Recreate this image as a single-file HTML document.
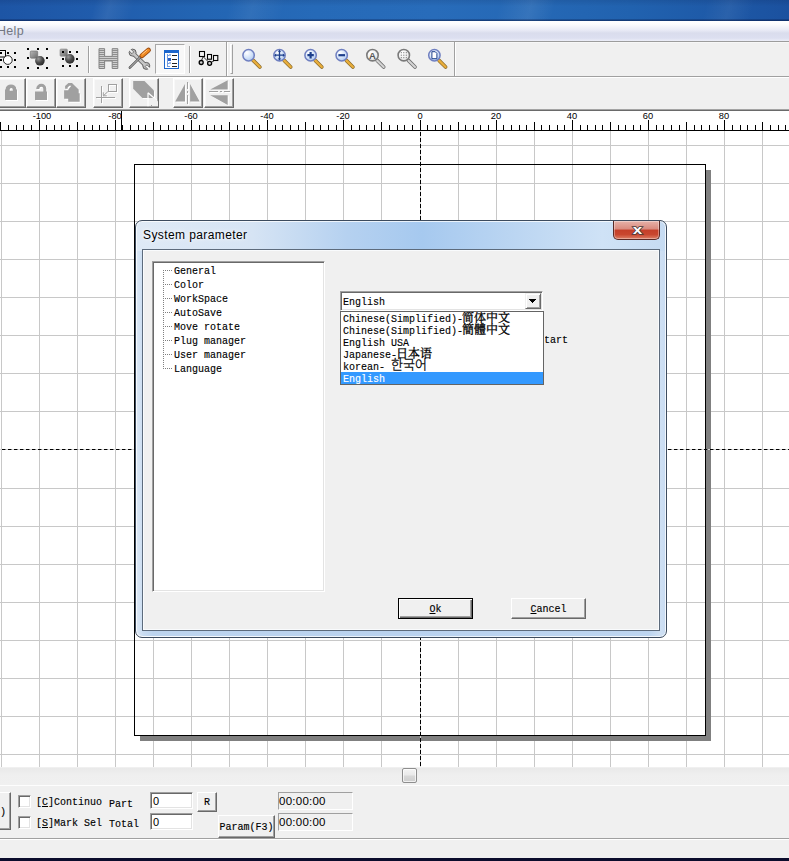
<!DOCTYPE html>
<html lang="en"><head><meta charset="utf-8"><title>System parameter</title>
<style>
html,body{margin:0;padding:0;background:#f0f0f0;}
body{width:789px;height:861px;overflow:hidden;position:relative;font-family:"Liberation Sans","Noto Sans CJK SC",sans-serif;font-size:12px;color:#000;}
#app{position:absolute;left:0;top:0;width:789px;height:861px;overflow:hidden;background:#f0f0f0;}
#app div,#app span,#app i,#app b,#app svg{position:absolute;box-sizing:border-box;}
/* SimSun-like text: 12px mono squeezed horizontally to a 6px advance */
.ss{font-family:"Liberation Mono","Noto Sans CJK SC",monospace;font-size:11px;line-height:12px;white-space:pre;display:inline-block;transform:scaleX(.9091);transform-origin:0 50%;-webkit-text-stroke:.15px #000;}
.ss.c{transform-origin:50% 50%;}
.ss u{text-decoration:underline;text-underline-offset:1px;text-decoration-thickness:1px;}
.cj{font-family:"Liberation Serif","Noto Serif CJK SC","Noto Sans CJK SC","Noto Sans CJK KR",serif;font-size:12px;line-height:12px;white-space:pre;-webkit-text-stroke:.3px #000;}
.cj.kr{font-family:"Liberation Sans","Noto Sans CJK KR","NanumGothic",sans-serif;font-weight:300;font-size:13px;}
/* title */
#titlebar{left:0;top:0;width:789px;height:21px;background:
 linear-gradient(180deg,rgba(0,0,30,.10) 0,rgba(0,0,0,0) 30%,rgba(0,0,0,0) 88%,rgba(0,10,50,.30) 94%,rgba(0,10,50,.55) 100%),
 linear-gradient(105deg,rgba(255,255,255,0) 12%,rgba(255,255,255,.07) 14%,rgba(255,255,255,0) 17%,rgba(255,255,255,0) 29%,rgba(255,255,255,.06) 32%,rgba(255,255,255,0) 36%,rgba(255,255,255,0) 63%,rgba(255,255,255,.08) 67%,rgba(255,255,255,0) 70%,rgba(255,255,255,0) 89%,rgba(255,255,255,.06) 92%,rgba(255,255,255,0) 95%),
 linear-gradient(90deg,#1d55a5 0,#205cac 12%,#2365b3 26%,#266ab8 40%,#286cba 55%,#2568b5 68%,#2162af 80%,#1e5aa8 90%,#1b519f 100%);}
#menubar{left:0;top:21px;width:789px;height:20px;background:linear-gradient(180deg,#ffffff 0,#fcfcfe 15%,#e9ebf6 45%,#dadded 60%,#dcdff0 85%,#eceef8 100%);}
#menubar .mi{left:-3px;top:3px;font-size:12.500px;line-height:14px;color:#737782;letter-spacing:.3px;}
/* toolbars */
#tb1{left:0;top:41px;width:789px;height:36px;background:#f0f0f0;border-top:1px solid #9c9c9c;border-bottom:1px solid #a0a0a0;box-shadow:inset 0 1px 0 #f7f7f7;}
#tb2{left:0;top:77px;width:789px;height:32px;background:#f0f0f0;border-top:1px solid #fff;}
.sep{width:2px;border-left:1px solid #a0a0a0;border-right:1px solid #fff;}
.tbtn{width:30px;height:30px;background:#f0f0f0;border:1px solid;border-color:#fff #696969 #696969 #fff;box-shadow:inset -1px -1px 0 #a0a0a0,inset 1px 1px 0 #f8f8f8;}
/* ruler */
#ruler{left:0;top:109px;width:789px;height:22px;background:#fff;border-top:2px solid #6e6e6e;border-image:linear-gradient(180deg,#a4a4a4 0,#a4a4a4 4.6%,#6a6a6a 4.6%,#6a6a6a 9.1%,#000 9.1%) 2 0 1 0;border-bottom:1px solid #000;overflow:hidden;}
#ruler i{bottom:0;width:1px;background:#000;}
#ruler .rl{top:0px;width:40px;text-align:center;font-size:9.300px;line-height:10px;color:#000;}
#ruler .rmark{left:121px;top:0;width:1px;height:20px;background:#000;}
#ruler .rmark2{left:121px;top:14px;width:2px;height:6px;background:#000;}
/* canvas */
#canvas{left:0;top:131px;width:789px;height:636px;background:#fff;overflow:hidden;}
#canvas .gv{top:0;width:1px;height:636px;background:#c8c8c8;}
#canvas .gh{left:0;height:1px;width:789px;background:#c8c8c8;}
#page{left:134px;top:33px;width:572px;height:572px;border:1px solid #000;}
#pageshadow{left:140px;top:39px;width:571px;height:571px;border-right:5px solid #808080;border-bottom:5px solid #808080;}
#hdash{left:0;top:318px;width:789px;height:1px;background:repeating-linear-gradient(90deg,#000 0,#000 3px,#777 3px,#777 4px,#d6d6d6 4px,#d6d6d6 6px);background-position:2px 0;background-size:6px 1px;}
#vdash{left:420px;top:0;width:1px;height:636px;background:repeating-linear-gradient(180deg,#000 0,#000 4px,#d6d6d6 4px,#d6d6d6 6px);background-position:0 1px;background-size:1px 6px;}
.chk{background:#f8f8f8;border:1px solid;border-color:#a8a8a8 #fff #fff #a8a8a8;}
.tbend{width:2px;border-left:1px solid #a0a0a0;border-right:1px solid #fff;}
.grip{width:3px;border-left:1px solid #fff;border-right:1px solid #a0a0a0;border-top:1px solid #fff;border-bottom:1px solid #a0a0a0;}
/* dialog */
#dlg{left:135px;top:220px;width:532px;height:418px;border:1px solid #3c4b5e;border-radius:7px;background:
 linear-gradient(90deg,#dfeaf6 0,#d6e4f4 22%,#b5d1f0 40%,#a6c9ef 54%,#bcd6f2 72%,#cfe2f6 88%,#c6dbf2 100%);box-shadow:inset 0 0 0 1px rgba(255,255,255,.75);}
#dlgglow{left:1px;top:30px;width:528px;height:385px;background:linear-gradient(90deg,#dbe7f5 0,#c9dcf1 1.2%,#bdd4ee 3%,#b9d2ef 50%,#bdd5f0 97%,#cfe0f3 99%,#c9dcf2 100%);border-radius:0 0 6px 6px;}
#dlgtitle{left:7px;top:7px;font-size:12px;line-height:14px;letter-spacing:.4px;color:#000;white-space:nowrap;text-shadow:0 0 6px #fff,0 0 3px rgba(255,255,255,.8);}
#dlgclose{left:477px;top:0px;width:47px;height:19px;border:1px solid #5a2a26;border-top:none;border-radius:0 0 5px 5px;background:linear-gradient(180deg,#e6b2a9 0,#d98a7e 45%,#c53f29 50%,#c9472f 75%,#dd7f66 100%);box-shadow:inset 0 0 0 1px rgba(255,255,255,.35);}
#client{left:6px;top:28px;width:518px;height:382px;background:#f0f0f0;border:1px solid #5d6b7c;box-shadow:inset 0 0 0 1px #f9fbfd;}
#tree{left:9px;top:11px;width:173px;height:331px;background:#fff;border:1px solid;border-color:#a0a0a0 #fff #fff #a0a0a0;box-shadow:inset 1px 1px 0 #696969,inset -1px -1px 0 #e3e3e3;}
#tree .tv{left:10px;top:8px;width:1px;height:99px;background:repeating-linear-gradient(180deg,#808080 0,#808080 1px,transparent 1px,transparent 2px);}
#tree .th{left:11px;width:8px;height:1px;background:repeating-linear-gradient(90deg,transparent 0,transparent 1px,#808080 1px,#808080 2px);}
#hidtxt{left:197px;top:84px;}
#combo{left:197px;top:41px;width:203px;height:20px;background:#fff;border:1px solid;border-color:#a0a0a0 #fff #fff #a0a0a0;box-shadow:inset 1px 1px 0 #696969,inset -1px -1px 0 #e3e3e3;}
#cbtn{right:1px;top:1px;width:16px;height:16px;background:#f0f0f0;border:1px solid;border-color:#f0f0f0 #696969 #696969 #f0f0f0;box-shadow:inset 1px 1px 0 #fff,inset -1px -1px 0 #a0a0a0;}
#ddl{left:197px;top:61px;width:204px;height:74px;background:#fff;border:1px solid #646464;overflow:hidden;box-shadow:1px 0 0 #f0f0f0;}
#ddl .it{left:0;width:202px;height:12px;}
#ddl .it .ss{left:2px;top:1px;}
#ddl .it .cj{top:0px;}
#ddl .it .kr{top:-1px;}
#ddl .sel{background:#3399ff;color:#fff;}
#ddl .sel .ss{-webkit-text-stroke:.15px #fff;}
.btn{width:75px;height:21px;background:#f0f0f0;border:1px solid;border-color:#fff #696969 #696969 #fff;box-shadow:inset -1px -1px 0 #a0a0a0,inset 1px 1px 0 #f0f0f0;text-align:center;}
.btn.def{border-color:#000;box-shadow:inset 1px 1px 0 #fff,inset -1px -1px 0 #696969,inset -2px -2px 0 #a0a0a0;}
.btn .ss{left:0;right:0;top:4px;text-align:center;}
/* bottom */
#hscroll{left:0;top:768px;width:789px;height:18px;background:linear-gradient(180deg,#e9e9e9 0,#efefef 40%,#f0f0f0 100%);border-bottom:1px solid #fdfdfd;}
#thumb{left:402px;top:0;width:15px;height:15px;border:1px solid #8e8e8e;border-radius:2px;background:linear-gradient(180deg,#f4f4f4 0,#e9e9e9 48%,#d9d9d9 52%,#cdcdcd 100%);box-shadow:inset 0 0 0 1px rgba(255,255,255,.7);}
#panel{left:0;top:786px;width:789px;height:53px;background:#f0f0f0;border-bottom:1px solid #a0a0a0;}
#status{left:0;top:839px;width:789px;height:19px;background:#f0f0f0;border-top:1px solid #fff;}
#taskbar{left:0;top:858px;width:789px;height:3px;background:#0b0c2c;}
.cb{width:13px;height:13px;background:#fff;border:1px solid;border-color:#a0a0a0 #fff #fff #a0a0a0;box-shadow:inset 1px 1px 0 #696969,inset -1px -1px 0 #e3e3e3;}
.inp{background:#fff;border:1px solid;border-color:#a0a0a0 #fff #fff #a0a0a0;box-shadow:inset 1px 1px 0 #696969,inset -1px -1px 0 #e3e3e3;}
.inp span{left:2px;top:2px;font-size:11px;line-height:12px;}
.pbtn{background:#f0f0f0;border:1px solid;border-color:#fff #696969 #696969 #fff;box-shadow:inset -1px -1px 0 #a0a0a0,inset 1px 1px 0 #f0f0f0;}
.tm{background:#f0f0f0;border:1px solid;border-color:#a0a0a0 #fff #fff #a0a0a0;}
.tm span{left:0px;top:2px;font-size:11.500px;line-height:13px;letter-spacing:.25px;}

#ic2 use .st{fill:none;}

</style></head>
<body>
<div id="app">
<div id="titlebar"></div>
<div id="menubar"><span class="mi">Help</span></div>
<div id="tb1">
 <div class="sep" style="left:88px;top:4px;height:27px"></div>
 <div class="chk" style="left:155px;top:2px;width:30px;height:30px"></div>
 <div class="sep" style="left:189px;top:4px;height:27px"></div>
 <div class="tbend" style="left:226px;top:0;height:34px"></div>
 <div class="grip" style="left:230px;top:2px;height:30px"></div>
 <div class="tbend" style="left:454px;top:0;height:34px"></div>
</div>
<svg id="ic1" style="left:0;top:41px" width="789" height="36" viewBox="0 41 789 36">
 <defs>
  <radialGradient id="sph" cx="35%" cy="30%" r="75%"><stop offset="0" stop-color="#9a9a9a"/><stop offset=".55" stop-color="#4a4a4a"/><stop offset="1" stop-color="#2a2a2a"/></radialGradient>
  <linearGradient id="sq" x1="0" y1="0" x2="1" y2="1"><stop offset="0" stop-color="#b8b8b8"/><stop offset="1" stop-color="#6a6a6a"/></linearGradient>
  <radialGradient id="lens" cx="35%" cy="30%" r="80%"><stop offset="0" stop-color="#ffffff"/><stop offset=".6" stop-color="#cfe0f8"/><stop offset="1" stop-color="#a9c4ee"/></radialGradient>
  <radialGradient id="lensg" cx="35%" cy="30%" r="80%"><stop offset="0" stop-color="#ffffff"/><stop offset="1" stop-color="#e4e4e4"/></radialGradient>
  <linearGradient id="gold" x1="0" y1="0" x2="1" y2="0"><stop offset="0" stop-color="#f3c96a"/><stop offset="1" stop-color="#c8861a"/></linearGradient>
  <pattern id="hst" width="4" height="2" patternUnits="userSpaceOnUse"><rect width="4" height="1" fill="#8e8e8e"/><rect y="1" width="4" height="1" fill="#cfcfcf"/></pattern>
  <g id="magB"><line x1="4.6" y1="5.2" x2="11.2" y2="11.8" stroke="#8a6a2a" stroke-width="3.700" stroke-linecap="round"/><line x1="4.6" y1="5.2" x2="11.2" y2="11.8" stroke="#e9ae3c" stroke-width="2.300" stroke-linecap="round"/><circle cx="0" cy="0" r="5.700" fill="url(#lens)" stroke="#6f7fc0" stroke-width="1.500"/></g>
  <g id="magG"><line x1="4.6" y1="5.2" x2="11.2" y2="11.8" stroke="#6e6e6e" stroke-width="3.700" stroke-linecap="round"/><line x1="4.6" y1="5.2" x2="11.2" y2="11.8" stroke="#d4d4d4" stroke-width="2.100" stroke-linecap="round"/><circle cx="0" cy="0" r="5.700" fill="url(#lensg)" stroke="#7a7a7a" stroke-width="1.600"/></g>
 </defs>
 <!-- icon 1 (cut at left) -->
 <g fill="#000" shape-rendering="crispEdges">
  <rect x="0" y="52" width="2" height="2"/><rect x="7" y="52" width="2" height="2"/><rect x="14" y="52" width="2" height="2"/>
  <rect x="0" y="59" width="2" height="2"/><rect x="14" y="59" width="2" height="2"/>
  <rect x="0" y="66" width="2" height="2"/><rect x="7" y="66" width="2" height="2"/><rect x="14" y="66" width="2" height="2"/>
 </g>
 <rect x="-3.5" y="50.5" width="9" height="6.5" fill="none" stroke="#000" stroke-width="1"/>
 <circle cx="7.8" cy="60" r="4.4" fill="#fff" stroke="#222" stroke-width="1"/>
 <!-- icon 2 -->
 <g fill="#000" shape-rendering="crispEdges">
  <rect x="27" y="48" width="2" height="2"/><rect x="37" y="48" width="2" height="2"/><rect x="46" y="48" width="2" height="2"/>
  <rect x="27" y="57" width="2" height="2"/><rect x="46" y="57" width="2" height="2"/>
  <rect x="27" y="67" width="2" height="2"/><rect x="37" y="67" width="2" height="2"/><rect x="46" y="67" width="2" height="2"/>
 </g>
 <rect x="30.3" y="51" width="7.4" height="7.2" rx="1" fill="url(#sq)" stroke="#6a6a6a" stroke-width=".6"/>
 <circle cx="39.9" cy="60.8" r="4.8" fill="url(#sph)"/>
 <!-- icon 3 -->
 <rect x="60" y="49" width="7.4" height="7.2" rx="1" fill="url(#sq)" stroke="#8a8a8a" stroke-width=".6"/>
 <g fill="#000" shape-rendering="crispEdges">
  <rect x="62" y="51" width="2" height="2"/><rect x="69" y="51" width="2" height="2"/><rect x="76" y="51" width="2" height="2"/>
  <rect x="62" y="58" width="2" height="2"/><rect x="76" y="58" width="2" height="2"/>
  <rect x="62" y="65" width="2" height="2"/><rect x="69" y="65" width="2" height="2"/><rect x="76" y="65" width="2" height="2"/>
 </g>
 <circle cx="69.8" cy="58.9" r="4.8" fill="url(#sph)"/>
 <!-- H hatch icon -->
 <path d="M99 48.700h5.600v7.700h7.600v-7.700h5.600v19.800h-5.600v-7.500h-7.600v7.500h-5.600z" fill="url(#hst)" stroke="#848484" stroke-width="1"/>
 <!-- tools icon -->
 <g>
  <!-- wrench TL->BR -->
  <line x1="133.5" y1="53.7" x2="145.4" y2="65.3" stroke="#555" stroke-width="4.2"/>
  <circle cx="132.6" cy="52.6" r="3.5" fill="#bdbdbd" stroke="#555" stroke-width=".9"/>
  <circle cx="146.300" cy="65.9" r="3.5" fill="#bdbdbd" stroke="#555" stroke-width=".9"/>
  <line x1="133.5" y1="53.7" x2="145.4" y2="65.3" stroke="#c6c6c6" stroke-width="2.600"/>
  <g transform="translate(132.6 52.6) rotate(45)"><rect x="-6" y="-1.250" width="6.3" height="2.500" fill="#f0f0f0"/><path d="M-3.400 -1.250H.3V1.250H-3.400" fill="none" stroke="#555" stroke-width=".7"/></g>
  <g transform="translate(146.300 65.9) rotate(225)"><rect x="-6" y="-1.250" width="6.3" height="2.500" fill="#f0f0f0"/><path d="M-3.400 -1.250H.3V1.250H-3.400" fill="none" stroke="#555" stroke-width=".7"/></g>
  <!-- screwdriver shaft BL -->
  <line x1="129.800" y1="67.7" x2="141" y2="56.5" stroke="#4e4e4e" stroke-width="2.400" stroke-linecap="round"/>
  <line x1="130" y1="67.5" x2="141" y2="56.5" stroke="#d6d6d6" stroke-width="1" stroke-linecap="round"/>
  <!-- handle TR -->
  <line x1="141.800" y1="55.800" x2="148.500" y2="50.100" stroke="#9a4a10" stroke-width="4.800" stroke-linecap="round"/>
  <line x1="142" y1="55.500" x2="148.300" y2="50.200" stroke="#f08a22" stroke-width="3.300" stroke-linecap="round"/>
  <line x1="142.500" y1="54" x2="147" y2="50.200" stroke="#ffc88a" stroke-width="1" stroke-linecap="round"/>
 </g>
 <!-- list icon (checked) -->
 <g shape-rendering="crispEdges">
  <rect x="164" y="50" width="15" height="19" rx="1" fill="#1c66cc"/>
  <rect x="165" y="53" width="13" height="15" fill="#fdfeff"/>
  <rect x="167" y="54" width="1" height="13" fill="#6f9be0"/>
  <rect x="168" y="55" width="2" height="1" fill="#6f9be0"/><rect x="169" y="54" width="2" height="2" fill="#9ab8ea"/><rect x="172" y="55" width="5" height="1" fill="#222"/>
  <rect x="168" y="58" width="3" height="3" fill="#2a62c8"/><rect x="172" y="59" width="5" height="1" fill="#222"/>
  <rect x="168" y="63" width="2" height="1" fill="#6f9be0"/><rect x="169" y="62" width="2" height="2" fill="#9ab8ea"/><rect x="172" y="63" width="5" height="1" fill="#222"/>
  <rect x="168" y="66" width="2" height="1" fill="#6f9be0"/><rect x="172" y="66" width="5" height="1" fill="#222"/>
 </g>
 <!-- flow icon -->
 <g fill="#f4f4f4" stroke="#000" stroke-width="1.100">
  <path d="M203 56.500l5.500 5.500M201.500 60.500l1.500-3.500M214.500 60.500l-3.500 2" fill="none" stroke-width=".8"/>
  <rect x="199.500" y="51.500" width="5" height="5"/>
  <rect x="207.500" y="54.500" width="4" height="4.700"/>
  <rect x="213.500" y="55.500" width="4.300" height="5"/>
  <circle cx="201.200" cy="62.500" r="2" fill="#d0d0d0" stroke-width="1.300"/>
  <circle cx="209.600" cy="63.300" r="2" fill="#d0d0d0" stroke-width="1.300"/>
 </g>
 <!-- magnifiers -->
 <use href="#magB" x="248.600" y="55.200"/>
 <use href="#magB" x="279.500" y="55.200"/>
 <use href="#magB" x="310.600" y="55.200"/>
 <use href="#magB" x="341.700" y="55.200"/>
 <use href="#magG" x="372.500" y="55.200"/>
 <use href="#magG" x="403.800" y="55.200"/>
 <use href="#magB" x="434.400" y="55.200"/>
 <!-- pan arrows -->
 <g stroke="#1d3f8c" stroke-width="1.300" fill="#1d3f8c">
  <path d="M279.500 51v8.400M275.300 55.200h8.400" fill="none"/>
  <path d="M279.500 49.800l1.700 2h-3.400zM279.500 60.600l1.700-2h-3.400zM274.100 55.200l2-1.700v3.400zM284.900 55.200l-2-1.700v3.400z" stroke="none"/>
 </g>
 <path d="M310.600 52v6.400M307.400 55.200h6.400" stroke="#1d3f8c" stroke-width="2.200" fill="none"/>
 <path d="M338.400 55.200h6.600" stroke="#1d3f8c" stroke-width="2.200" fill="none"/>
 <text x="372.500" y="58.600" text-anchor="middle" font-family="Liberation Sans, sans-serif" font-weight="bold" font-size="9.500" fill="#555">A</text>
 <g fill="#666"><rect x="400.800" y="52.200" width="1" height="1"/><rect x="403.300" y="52.200" width="1" height="1"/><rect x="405.800" y="52.200" width="1" height="1"/><rect x="400.800" y="54.700" width="1" height="1"/><rect x="403.300" y="54.700" width="1" height="1"/><rect x="405.800" y="54.700" width="1" height="1"/><rect x="400.800" y="57.200" width="1" height="1"/><rect x="403.300" y="57.200" width="1" height="1"/><rect x="405.800" y="57.200" width="1" height="1"/></g>
 <path d="M431.900 51.700h3.300l1.700 1.700v5.300h-5z" fill="#fff" stroke="#1d3f8c" stroke-width="1"/>
</svg>

<div id="tb2">
 <div class="tbtn" style="left:-4px;top:0"></div>
 <div class="tbtn" style="left:26px;top:0"></div>
 <div class="tbtn" style="left:56px;top:0"></div>
 <div class="tbtn" style="left:93px;top:0"></div>
 <div class="tbtn" style="left:129px;top:0"></div>
 <div class="tbtn" style="left:173px;top:0"></div>
 <div class="tbtn" style="left:204px;top:0"></div>
</div>
<svg id="ic2" style="left:0;top:77px" width="789" height="32" viewBox="0 77 789 32">
 <defs>
  <g id="dis">
   <!-- lock closed -->
   <path fill-rule="evenodd" d="M5 100v-10.600h.6a5.400 5 0 0 1 10.800 0h.6v10.600zM9.700 90.800h3.100v-1.200a1.550 1.600 0 0 0-3.100 0z"/>
   <!-- lock open -->
   <path fill-rule="evenodd" d="M35 100v-8.600h8.300v-2.600a2 2 0 0 0-4 0v.2h-3v-.4a5 4.800 0 0 1 10 0v2.800h.7v8.600z"/>
   <!-- multi lock -->
   <path d="M64.100 90.200V98.700H68.200V101.700H79.700V93.200H78.700V89.600L72 83.100H68.400L65.100 86V88.700H67.600V87.400L69.400 85.700H71.300L68.600 89.300L68.200 90.200z"/>
   <!-- node edit polygon -->
   <path d="M133.200 81h11.300l9.500 9.500v7.500h-11.700l-9.100-9.300z"/>
   <!-- mirror h -->
   <path d="M175.200 101.500h9.800v-17.500zM190.100 84v17.500h9.600z"/>
   <!-- mirror v -->
   <path d="M227.700 80.200v9.400h-17.500zM210.200 95.200h17.500v9.700z"/>
   <!-- origin icon -->
   <path d="M101 86h1v17h-1zM96 97h19v1h-19zM108 84h9v1h-9zM108 91h9v1h-9zM108 85h1v6h-1zM116 85h1v6h-1z"/>
   <path d="M107.800 91.700l-4.500 4.100M103.300 92.300v3.500h3.500" stroke="currentColor" stroke-width="1" fill="none"/>
   <!-- axes -->
   <path d="M187 82h1v7h-1zM187 91h1v2h-1zM187 95h1v9h-1zM209 91h9v1h-9zM220 91h2v1h-2zM224 91h6v1h-6z"/>
  </g>
 </defs>
 <use href="#dis" x="1" y="1" fill="#fff" color="#fff"/>
 <use href="#dis" fill="#a0a0a0" color="#a0a0a0"/>
 <!-- cursor in node edit -->
 <path d="M148 92.700v13.500M148 92.700l9 7.800" stroke="#fff" stroke-width="1.200" fill="none"/>
 <path d="M149 98v8h9v-4.500l-4-3.500z" fill="#f0f0f0"/>
 <rect x="151" y="105" width="1" height="1" fill="#a0a0a0"/>
</svg>

<div id="ruler">
<i style="left:0px;height:8px"></i><i style="left:8px;height:5px"></i><i style="left:16px;height:5px"></i><i style="left:23px;height:5px"></i><i style="left:31px;height:5px"></i><i style="left:39px;height:10px"></i><i style="left:46px;height:5px"></i><i style="left:54px;height:5px"></i><i style="left:61px;height:5px"></i><i style="left:69px;height:5px"></i><i style="left:77px;height:8px"></i><i style="left:84px;height:5px"></i><i style="left:92px;height:5px"></i><i style="left:99px;height:5px"></i><i style="left:107px;height:5px"></i><i style="left:115px;height:10px"></i><i style="left:122px;height:5px"></i><i style="left:130px;height:5px"></i><i style="left:138px;height:5px"></i><i style="left:145px;height:5px"></i><i style="left:153px;height:8px"></i><i style="left:160px;height:5px"></i><i style="left:168px;height:5px"></i><i style="left:176px;height:5px"></i><i style="left:183px;height:5px"></i><i style="left:191px;height:10px"></i><i style="left:199px;height:5px"></i><i style="left:206px;height:5px"></i><i style="left:214px;height:5px"></i><i style="left:221px;height:5px"></i><i style="left:229px;height:8px"></i><i style="left:237px;height:5px"></i><i style="left:244px;height:5px"></i><i style="left:252px;height:5px"></i><i style="left:259px;height:5px"></i><i style="left:267px;height:10px"></i><i style="left:275px;height:5px"></i><i style="left:282px;height:5px"></i><i style="left:290px;height:5px"></i><i style="left:298px;height:5px"></i><i style="left:305px;height:8px"></i><i style="left:313px;height:5px"></i><i style="left:320px;height:5px"></i><i style="left:328px;height:5px"></i><i style="left:336px;height:5px"></i><i style="left:343px;height:10px"></i><i style="left:351px;height:5px"></i><i style="left:359px;height:5px"></i><i style="left:366px;height:5px"></i><i style="left:374px;height:5px"></i><i style="left:381px;height:8px"></i><i style="left:389px;height:5px"></i><i style="left:397px;height:5px"></i><i style="left:404px;height:5px"></i><i style="left:412px;height:5px"></i><i style="left:420px;height:10px"></i><i style="left:427px;height:5px"></i><i style="left:435px;height:5px"></i><i style="left:442px;height:5px"></i><i style="left:450px;height:5px"></i><i style="left:458px;height:8px"></i><i style="left:465px;height:5px"></i><i style="left:473px;height:5px"></i><i style="left:480px;height:5px"></i><i style="left:488px;height:5px"></i><i style="left:496px;height:10px"></i><i style="left:503px;height:5px"></i><i style="left:511px;height:5px"></i><i style="left:519px;height:5px"></i><i style="left:526px;height:5px"></i><i style="left:534px;height:8px"></i><i style="left:541px;height:5px"></i><i style="left:549px;height:5px"></i><i style="left:557px;height:5px"></i><i style="left:564px;height:5px"></i><i style="left:572px;height:10px"></i><i style="left:580px;height:5px"></i><i style="left:587px;height:5px"></i><i style="left:595px;height:5px"></i><i style="left:602px;height:5px"></i><i style="left:610px;height:8px"></i><i style="left:618px;height:5px"></i><i style="left:625px;height:5px"></i><i style="left:633px;height:5px"></i><i style="left:640px;height:5px"></i><i style="left:648px;height:10px"></i><i style="left:656px;height:5px"></i><i style="left:663px;height:5px"></i><i style="left:671px;height:5px"></i><i style="left:679px;height:5px"></i><i style="left:686px;height:8px"></i><i style="left:694px;height:5px"></i><i style="left:701px;height:5px"></i><i style="left:709px;height:5px"></i><i style="left:717px;height:5px"></i><i style="left:724px;height:10px"></i><i style="left:732px;height:5px"></i><i style="left:740px;height:5px"></i><i style="left:747px;height:5px"></i><i style="left:755px;height:5px"></i><i style="left:762px;height:8px"></i><i style="left:770px;height:5px"></i><i style="left:778px;height:5px"></i><i style="left:785px;height:5px"></i>
<span class="rl" style="left:22px">-100</span>
<span class="rl" style="left:95px">-80</span>
<span class="rl" style="left:171px">-60</span>
<span class="rl" style="left:247px">-40</span>
<span class="rl" style="left:323px">-20</span>
<span class="rl" style="left:400px">0</span>
<span class="rl" style="left:476px">20</span>
<span class="rl" style="left:552px">40</span>
<span class="rl" style="left:628px">60</span>
<span class="rl" style="left:704px">80</span>
<b class="rmark"></b><b class="rmark2"></b>
</div>
<div id="canvas">
<i class="gv" style="left:381px"></i><i class="gv" style="left:458px"></i><i class="gh" style="top:280px"></i><i class="gh" style="top:357px"></i><i class="gv" style="left:343px"></i><i class="gv" style="left:496px"></i><i class="gh" style="top:242px"></i><i class="gh" style="top:395px"></i><i class="gv" style="left:305px"></i><i class="gv" style="left:534px"></i><i class="gh" style="top:204px"></i><i class="gh" style="top:433px"></i><i class="gv" style="left:267px"></i><i class="gv" style="left:572px"></i><i class="gh" style="top:166px"></i><i class="gh" style="top:471px"></i><i class="gv" style="left:229px"></i><i class="gv" style="left:610px"></i><i class="gh" style="top:128px"></i><i class="gh" style="top:509px"></i><i class="gv" style="left:191px"></i><i class="gv" style="left:648px"></i><i class="gh" style="top:90px"></i><i class="gh" style="top:547px"></i><i class="gv" style="left:153px"></i><i class="gv" style="left:686px"></i><i class="gh" style="top:52px"></i><i class="gh" style="top:585px"></i><i class="gv" style="left:115px"></i><i class="gv" style="left:724px"></i><i class="gh" style="top:14px"></i><i class="gh" style="top:623px"></i><i class="gv" style="left:77px"></i><i class="gv" style="left:762px"></i><i class="gv" style="left:39px"></i><i class="gv" style="left:1px"></i>
<div id="pageshadow"></div><div id="page"></div>
<div id="hdash"></div><div id="vdash"></div>
</div>
<div id="dlg">
 <div id="dlgglow"></div>
 <span id="dlgtitle">System parameter</span>
 <div id="dlgclose"><svg width="47" height="19" viewBox="0 0 47 19" style="left:0;top:0"><text x="23.500" y="12.800" text-anchor="middle" font-family="Liberation Sans, sans-serif" font-weight="bold" font-size="13.500" fill="#fff" stroke="#4a3a3a" stroke-width="1.500" paint-order="stroke" textLength="9.500" lengthAdjust="spacingAndGlyphs">x</text></svg></div>
 <div id="client">
  <div id="tree">
   <div class="tv"></div>
   <div class="th" style="top:8px"></div><span class="ss" style="left:21px;top:3px">General</span>
   <div class="th" style="top:22px"></div><span class="ss" style="left:21px;top:17px">Color</span>
   <div class="th" style="top:36px"></div><span class="ss" style="left:21px;top:31px">WorkSpace</span>
   <div class="th" style="top:50px"></div><span class="ss" style="left:21px;top:45px">AutoSave</span>
   <div class="th" style="top:64px"></div><span class="ss" style="left:21px;top:59px">Move rotate</span>
   <div class="th" style="top:78px"></div><span class="ss" style="left:21px;top:73px">Plug manager</span>
   <div class="th" style="top:92px"></div><span class="ss" style="left:21px;top:87px">User manager</span>
   <div class="th" style="top:106px"></div><span class="ss" style="left:21px;top:101px">Language</span>
  </div>
  <span class="ss" id="hidtxt">Changes take effect after next restart</span>
  <div id="combo"><span class="ss" style="left:2px;top:4px">English</span><div id="cbtn"><svg width="7" height="4" viewBox="0 0 7 4" style="left:3px;top:5px" shape-rendering="crispEdges"><path d="M0 0h7l-3.500 4z" fill="#000"/></svg></div></div>
  <div id="ddl">
   <div class="it" style="top:0"><span class="ss">Chinese(Simplified)-</span><span class="cj" style="left:121px">简体中文</span></div>
   <div class="it" style="top:12px"><span class="ss">Chinese(Simplified)-</span><span class="cj" style="left:121px">簡體中文</span></div>
   <div class="it" style="top:24px"><span class="ss">English USA</span></div>
   <div class="it" style="top:36px"><span class="ss">Japanese-</span><span class="cj" style="left:55px">日本语</span></div>
   <div class="it" style="top:48px"><span class="ss">korean- </span><span class="cj kr" style="left:50px">한국어</span></div>
   <div class="it sel" style="top:60px"><span class="ss">English</span></div>
  </div>
  <div class="btn def" style="left:255px;top:348px"><span class="ss c"><u>O</u>k</span></div>
  <div class="btn" style="left:368px;top:348px"><span class="ss c"><u>C</u>ancel</span></div>
 </div>
</div>

<div id="hscroll"><div id="thumb"></div></div>
<div id="panel">
 <div class="pbtn" style="left:-30px;top:6px;width:41px;height:38px"><span class="ss" style="left:29px;top:13px">)</span></div>
 <div class="cb" style="left:18px;top:9px"></div>
 <div class="cb" style="left:18px;top:30px"></div>
 <span class="ss" style="left:36px;top:10px">[<u>C</u>]Continuo</span>
 <span class="ss" style="left:36px;top:31px">[<u>S</u>]Mark Sel</span>
 <span class="ss" style="left:109px;top:12px">Part</span>
 <span class="ss" style="left:109px;top:32px">Total</span>
 <div class="inp" style="left:150px;top:6px;width:43px;height:17px"><span>0</span></div>
 <div class="inp" style="left:150px;top:27px;width:43px;height:17px"><span>0</span></div>
 <div class="pbtn" style="left:197px;top:6px;width:20px;height:20px"><span class="ss c" style="left:0;right:0;top:3px;text-align:center">R</span></div>
 <div class="pbtn" style="left:218px;top:29px;width:57px;height:23px"><span class="ss c" style="left:-20px;right:-20px;top:5px;text-align:center">Param(F3)</span></div>
 <div class="tm" style="left:278px;top:6px;width:75px;height:18px"><span>00:00:00</span></div>
 <div class="tm" style="left:278px;top:27px;width:75px;height:18px"><span>00:00:00</span></div>
</div>
<div id="status"></div>
<div id="taskbar"></div>

</div>
</body></html>
